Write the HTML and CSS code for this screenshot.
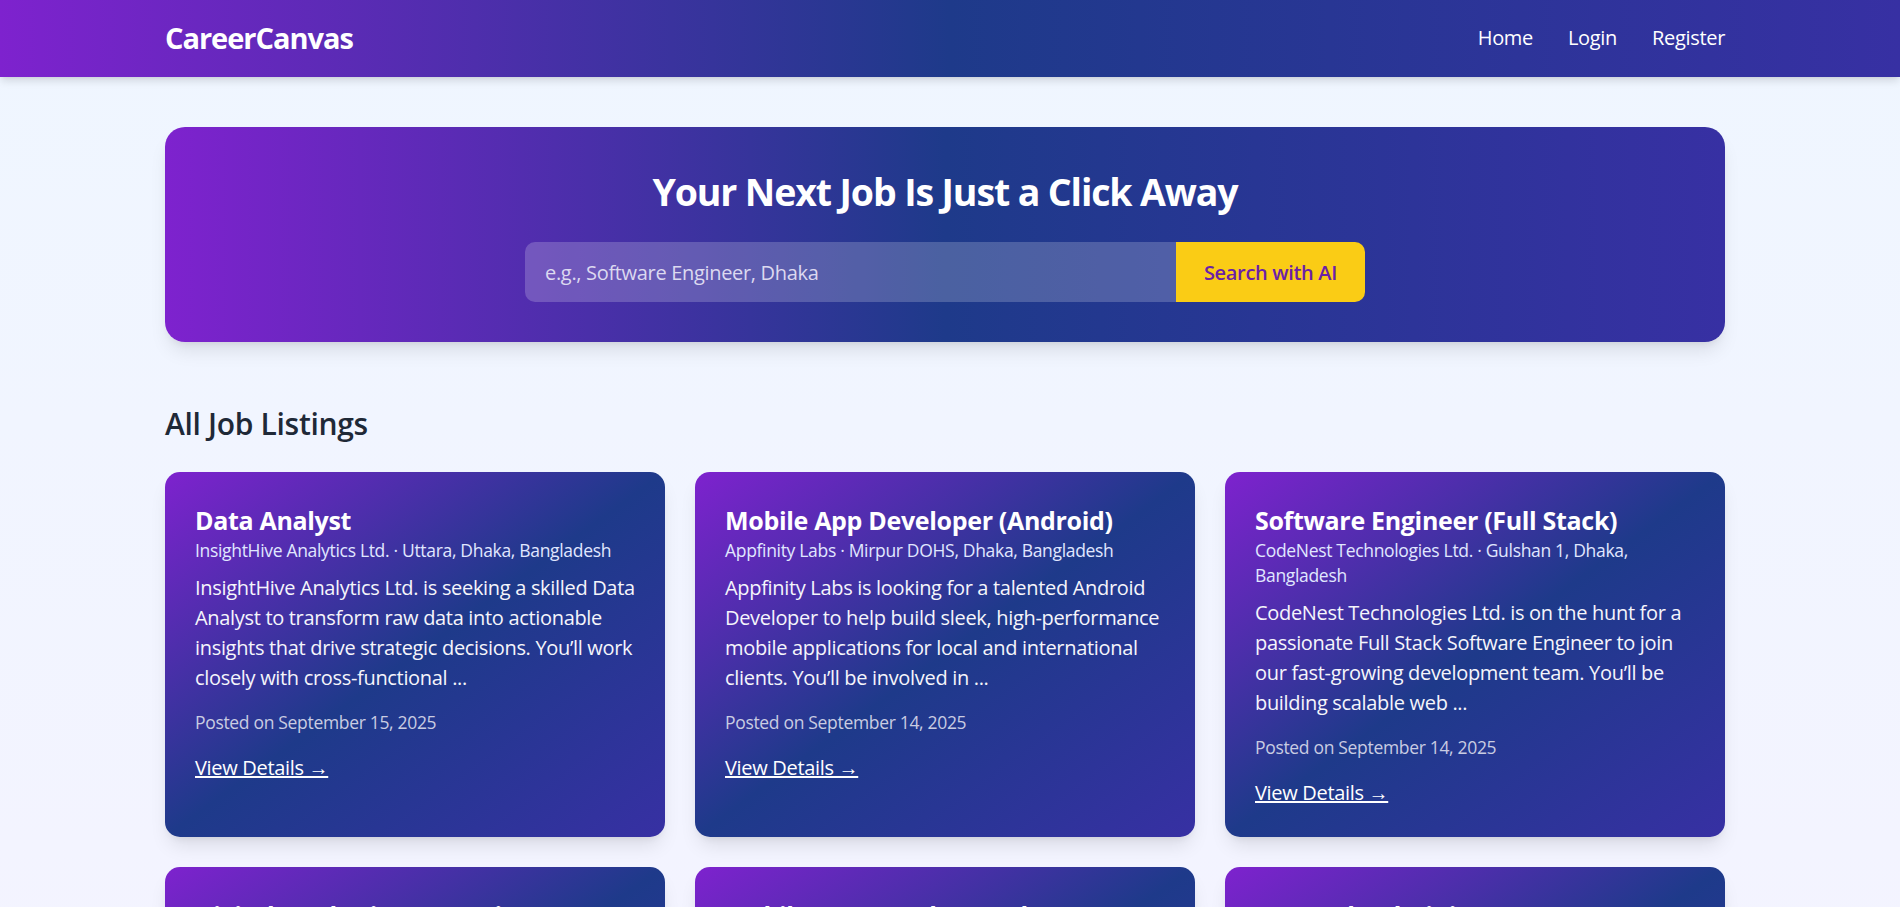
FILE: index.html
```html
<!DOCTYPE html>
<html lang="en">
<head>
<meta charset="utf-8">
<title>CareerCanvas</title>
<link rel="stylesheet" href="styles.css">
</head>
<body>
<header class="site-header">
  <div class="container header-inner">
    <a class="logo" href="#">CareerCanvas</a>
    <nav class="nav">
      <a href="#">Home</a>
      <a href="#">Login</a>
      <a href="#">Register</a>
    </nav>
  </div>
</header>

<main class="container">
  <section class="hero">
    <h1>Your Next Job Is Just a Click Away</h1>
    <form class="search">
      <input type="text" placeholder="e.g., Software Engineer, Dhaka">
      <button type="button">Search with AI</button>
    </form>
  </section>

  <section class="listings">
    <h2>All Job Listings</h2>
    <div class="grid">
      <article class="card">
        <h3>Data Analyst</h3>
        <p class="company">InsightHive Analytics Ltd. · Uttara, Dhaka, Bangladesh</p>
        <p class="desc">InsightHive Analytics Ltd. is seeking a skilled Data Analyst to transform raw data into actionable insights that drive strategic decisions. You’ll work closely with cross-functional ...</p>
        <p class="posted">Posted on September 15, 2025</p>
        <p class="more"><a href="#">View Details →</a></p>
      </article>
      <article class="card">
        <h3>Mobile App Developer (Android)</h3>
        <p class="company">Appfinity Labs · Mirpur DOHS, Dhaka, Bangladesh</p>
        <p class="desc">Appfinity Labs is looking for a talented Android Developer to help build sleek, high-performance mobile applications for local and international clients. You’ll be involved in ...</p>
        <p class="posted">Posted on September 14, 2025</p>
        <p class="more"><a href="#">View Details →</a></p>
      </article>
      <article class="card">
        <h3>Software Engineer (Full Stack)</h3>
        <p class="company">CodeNest Technologies Ltd. · Gulshan 1, Dhaka, Bangladesh</p>
        <p class="desc">CodeNest Technologies Ltd. is on the hunt for a passionate Full Stack Software Engineer to join our fast-growing development team. You’ll be building scalable web ...</p>
        <p class="posted">Posted on September 14, 2025</p>
        <p class="more"><a href="#">View Details →</a></p>
      </article>
      <article class="card">
        <h3>Digital Marketing Executive</h3>
        <p class="company">BrightReach Media · Banani, Dhaka, Bangladesh</p>
        <p class="desc">BrightReach Media is hiring a creative Digital Marketing Executive to plan and run campaigns across social, search and email channels. You’ll be working ...</p>
        <p class="posted">Posted on September 13, 2025</p>
        <p class="more"><a href="#">View Details →</a></p>
      </article>
      <article class="card">
        <h3>Mobile App Developer (Flutter)</h3>
        <p class="company">Appfinity Labs · Mirpur DOHS, Dhaka, Bangladesh</p>
        <p class="desc">Appfinity Labs is expanding its mobile team and needs a Flutter Developer to craft beautiful cross-platform apps for our growing list of clients. You’ll ...</p>
        <p class="posted">Posted on September 13, 2025</p>
        <p class="more"><a href="#">View Details →</a></p>
      </article>
      <article class="card">
        <h3>Network Administrator</h3>
        <p class="company">NetBridge Solutions · Motijheel, Dhaka, Bangladesh</p>
        <p class="desc">NetBridge Solutions is seeking a reliable Network Administrator to manage, secure and maintain our corporate network infrastructure. You’ll be responsible ...</p>
        <p class="posted">Posted on September 12, 2025</p>
        <p class="more"><a href="#">View Details →</a></p>
      </article>
    </div>
  </section>
</main>
</body>
</html>
```

FILE: styles.css
```css
* {
  box-sizing: border-box;
}

html,
body {
  margin: 0;
  padding: 0;
}

body {
  font-family: "Open Sans", "Noto Sans", sans-serif;
  letter-spacing: -0.02em;
  color: #1f2937;
  background: linear-gradient(180deg, #eff6ff 0%, #f5f3ff 100%);
  min-height: 100vh;
}

.container {
  width: 1560px;
  margin-left: calc(50% - 785px);
  margin-right: auto;
}

/* Header */
.site-header {
  height: 77px;
  background: linear-gradient(90deg, #7e22ce 0%, #1e3a8a 50%, #3730a3 100%);
  box-shadow: 0 5px 8px -1px rgba(0, 0, 0, 0.12), 0 2px 4px -2px rgba(0, 0, 0, 0.08);
  position: relative;
  z-index: 1;
}

.header-inner {
  display: flex;
  justify-content: space-between;
  align-items: flex-start;
  padding-top: 18px;
}

.logo {
  font-size: 29px;
  line-height: 40px;
  font-weight: 700;
  letter-spacing: -0.035em;
  color: #ffffff;
  text-decoration: none;
}

.nav {
  display: flex;
  gap: 35px;
  margin-top: 5px;
}

.nav a {
  font-size: 20px;
  line-height: 30px;
  color: #ffffff;
  text-decoration: none;
}

/* Hero */
.hero {
  margin-top: 50px;
  padding: 40px;
  border-radius: 20px;
  background: linear-gradient(90deg, #7e22ce 0%, #1e3a8a 50%, #3730a3 100%);
  box-shadow: 0 12px 19px -4px rgba(0, 0, 0, 0.1), 0 5px 8px -5px rgba(0, 0, 0, 0.1);
  text-align: center;
}

.hero h1 {
  margin: 2px 0 28px;
  font-size: 37.5px;
  line-height: 45px;
  font-weight: 700;
  letter-spacing: -0.03em;
  color: #ffffff;
}

.search {
  display: flex;
  width: 840px;
  margin: 0 auto;
}

.search input {
  flex: 1;
  min-width: 0;
  height: 60px;
  padding: 15px 20px;
  border: 0;
  border-radius: 10px 0 0 10px;
  background: rgba(255, 255, 255, 0.2);
  color: #ffffff;
  font-family: inherit;
  letter-spacing: inherit;
  font-size: 20px;
  line-height: 30px;
  outline: none;
}

.search input::placeholder {
  color: #dcd9f0;
}

.search button {
  width: 189px;
  height: 60px;
  padding: 0;
  border: 0;
  border-radius: 0 10px 10px 0;
  background: #facc15;
  color: #6b21a8;
  font-family: inherit;
  letter-spacing: inherit;
  font-size: 20px;
  font-weight: 600;
  cursor: pointer;
}

/* Listings */
.listings h2 {
  margin: 62px 0 28px;
  font-size: 30px;
  line-height: 40px;
  font-weight: 600;
  color: #1f2937;
}

.grid {
  display: grid;
  grid-template-columns: repeat(3, 1fr);
  gap: 30px;
  padding-bottom: 60px;
}

.card {
  padding: 31px 30px 29px;
  border-radius: 15px;
  background: linear-gradient(to bottom right, #7e22ce 0%, #1e3a8a 50%, #3730a3 100%);
  box-shadow: 0 12px 19px -4px rgba(0, 0, 0, 0.1), 0 5px 8px -5px rgba(0, 0, 0, 0.1);
  color: #ffffff;
}

.card h3 {
  margin: 0;
  font-size: 25px;
  line-height: 35px;
  font-weight: 700;
  color: #ffffff;
}

.company {
  margin: 0;
  font-size: 17.5px;
  line-height: 25px;
  color: #e0e7ff;
}

.desc {
  margin: 10px 0 0;
  font-size: 20px;
  line-height: 30px;
  color: #f5f5fb;
}

.posted {
  margin: 17px 0 0;
  font-size: 17.5px;
  line-height: 25px;
  color: #c9cce2;
}

.more {
  margin: 18px 0 0;
  font-size: 20px;
  line-height: 30px;
}

.more a {
  color: #ffffff;
  text-decoration: underline;
}
```
